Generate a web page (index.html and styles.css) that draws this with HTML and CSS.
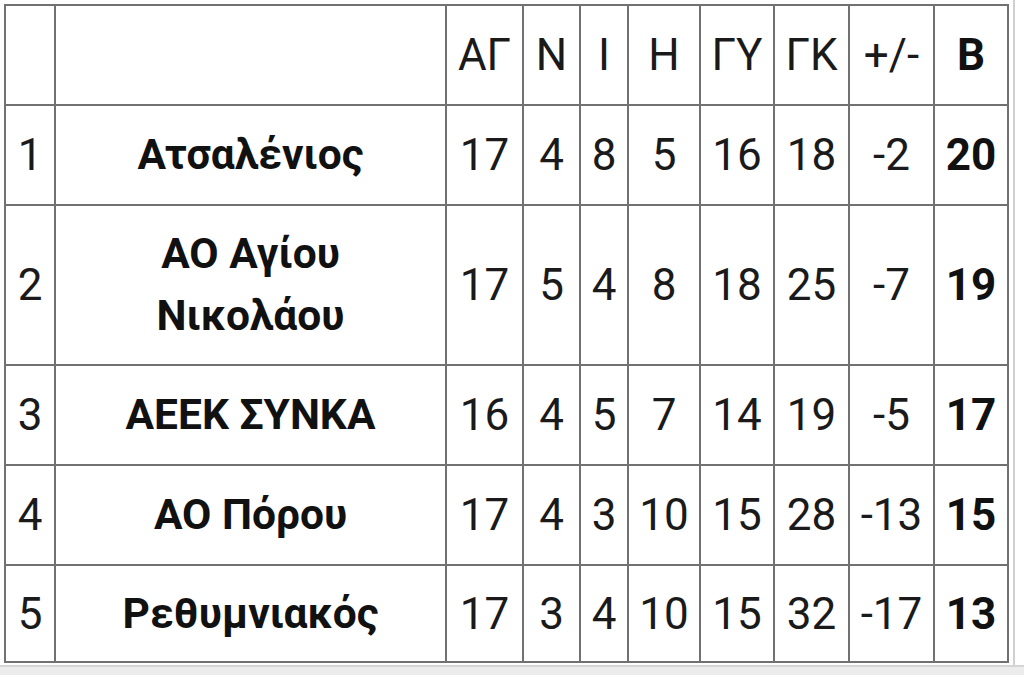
FILE: index.html
```html
<!DOCTYPE html>
<html lang="el">
<head>
<meta charset="utf-8">
<title>Βαθμολογία</title>
<link rel="stylesheet" href="styles.css">
</head>
<body>
<div class="page">
  <div class="frame">
    <table class="standings">
      <colgroup>
        <col class="c-pos"><col class="c-team"><col class="c-ag"><col class="c-n"><col class="c-i"><col class="c-h"><col class="c-gy"><col class="c-gk"><col class="c-diff"><col class="c-b">
      </colgroup>
      <tr class="head">
        <td></td><td></td><td>ΑΓ</td><td>Ν</td><td>Ι</td><td>Η</td><td>ΓΥ</td><td>ΓΚ</td><td>+/-</td><td class="pts">Β</td>
      </tr>
      <tr>
        <td>1</td><td class="team">Ατσαλένιος</td><td>17</td><td>4</td><td>8</td><td>5</td><td>16</td><td>18</td><td>-2</td><td class="pts">20</td>
      </tr>
      <tr class="tall">
        <td>2</td><td class="team">ΑΟ Αγίου<br>Νικολάου</td><td>17</td><td>5</td><td>4</td><td>8</td><td>18</td><td>25</td><td>-7</td><td class="pts">19</td>
      </tr>
      <tr>
        <td>3</td><td class="team">ΑΕΕΚ ΣΥΝΚΑ</td><td>16</td><td>4</td><td>5</td><td>7</td><td>14</td><td>19</td><td>-5</td><td class="pts">17</td>
      </tr>
      <tr>
        <td>4</td><td class="team">ΑΟ Πόρου</td><td>17</td><td>4</td><td>3</td><td>10</td><td>15</td><td>28</td><td>-13</td><td class="pts">15</td>
      </tr>
      <tr class="last">
        <td>5</td><td class="team">Ρεθυμνιακός</td><td>17</td><td>3</td><td>4</td><td>10</td><td>15</td><td>32</td><td>-17</td><td class="pts">13</td>
      </tr>
    </table>
  </div>
  <div class="footer"></div>
</div>
</body>
</html>
```

FILE: styles.css
```css
html, body {
  margin: 0;
  padding: 0;
  background: #ffffff;
}

.page {
  width: 1024px;
  height: 675px;
  overflow: hidden;
  display: flex;
  flex-direction: column;
}

.frame {
  width: 1015px;
  height: 665px;
  flex: none;
  padding: 4px 0 0 4px;
  box-sizing: border-box;
  border-right: 2px solid #d0d0d0;
  overflow: hidden;
}

.footer {
  flex: 1;
  background: #ececec;
  border-top: 2px solid #d4d4d4;
}

.standings {
  border-collapse: collapse;
  table-layout: fixed;
  width: 1005px;
  font-family: Roboto, "Liberation Sans", sans-serif;
  font-size: 44px;
  color: #1a1a1a;
}

.standings td {
  border: 2px solid #717171;
  padding: 0;
  text-align: center;
  vertical-align: middle;
  height: 98px;
  line-height: 1;
}

.standings tr.tall td {
  height: 158px;
}

.standings tr.last td {
  height: 95px;
}

.standings .team {
  font-weight: 700;
  font-size: 42.5px;
  color: #111111;
  line-height: 62px;
}

.standings .pts {
  font-weight: 700;
  color: #111111;
}

.c-pos { width: 50px; }
.c-team { width: 391px; }
.c-ag { width: 77px; }
.c-n { width: 57px; }
.c-i { width: 48px; }
.c-h { width: 72px; }
.c-gy { width: 74px; }
.c-gk { width: 75px; }
.c-diff { width: 85px; }
.c-b { width: 74px; }
```
